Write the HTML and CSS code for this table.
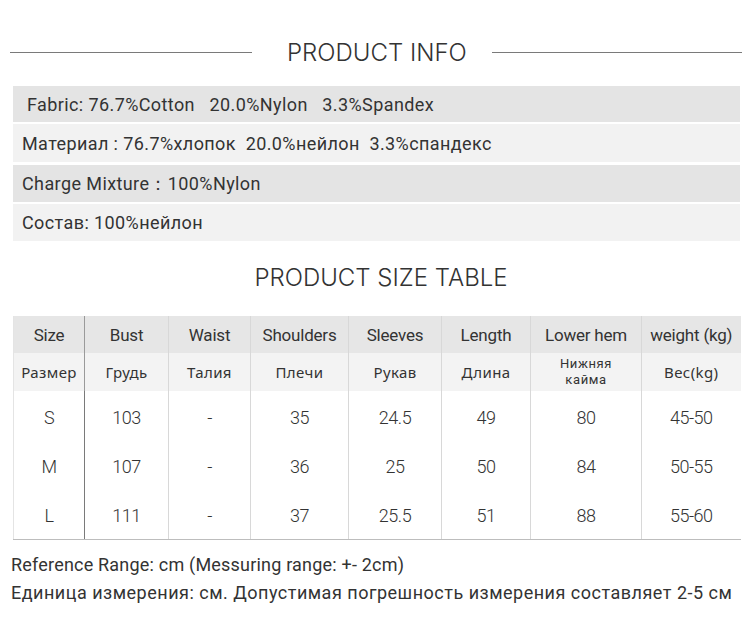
FILE: index.html
```html
<!DOCTYPE html>
<html lang="en">
<head>
<meta charset="utf-8">
<link rel="stylesheet" href="styles.css">
</head>
<body>
<div class="page">
  <div class="section-head">
    <span class="rule rule-left"></span>
    <h2 class="title">PRODUCT INFO</h2>
    <span class="rule rule-right"></span>
  </div>

  <div class="info">
    <div class="info-row dark r1"><span class="first">Fabric: 76.7%Cotton   20.0%Nylon   3.3%Spandex</span></div>
    <div class="info-row light r2">Материал : 76.7%хлопок  20.0%нейлон  3.3%спандекс</div>
    <div class="info-row dark r3">Charge Mixture：100%Nylon</div>
    <div class="info-row light r4">Состав: 100%нейлон</div>
  </div>

  <h2 class="title size-title">PRODUCT SIZE TABLE</h2>

  <table class="sizes">
    <colgroup>
      <col style="width:71px"><col style="width:84px"><col style="width:82px"><col style="width:98px">
      <col style="width:93px"><col style="width:89px"><col style="width:111px"><col style="width:99px">
    </colgroup>
    <tr class="head-en">
      <td>Size</td><td>Bust</td><td>Waist</td><td>Shoulders</td><td>Sleeves</td><td>Length</td><td>Lower hem</td><td>weight (kg)</td>
    </tr>
    <tr class="head-ru">
      <td>Размер</td><td>Грудь</td><td>Талия</td><td>Плечи</td><td>Рукав</td><td>Длина</td><td class="two">Нижняя<br>кайма</td><td>Вес(kg)</td>
    </tr>
    <tr class="data">
      <td>S</td><td>103</td><td>-</td><td>35</td><td>24.5</td><td>49</td><td>80</td><td>45-50</td>
    </tr>
    <tr class="data">
      <td>M</td><td>107</td><td>-</td><td>36</td><td>25</td><td>50</td><td>84</td><td>50-55</td>
    </tr>
    <tr class="data last">
      <td>L</td><td>111</td><td>-</td><td>37</td><td>25.5</td><td>51</td><td>88</td><td>55-60</td>
    </tr>
  </table>

  <div class="notes">
    <p class="note1">Reference Range: cm (Messuring range: +- 2cm)</p>
    <p class="note2">Единица измерения: см. Допустимая погрешность измерения составляет 2-5 см</p>
  </div>
</div>
</body>
</html>
```
FILE: styles.css
```css
* { box-sizing: border-box; }
html, body { margin: 0; padding: 0; background: #fff; }
body {
  font-family: Roboto, "Noto Sans", "DejaVu Sans", sans-serif;
  color: #333;
  width: 750px;
  height: 630px;
  overflow: hidden;
}
.page { padding-top: 32px; }

.section-head {
  display: flex;
  align-items: center;
  height: 40px;
}
.rule { display: block; height: 1px; background: #7a7a7a; }
.rule-left { margin-left: 10px; width: 242px; }
.rule-right { width: 250px; margin-left: auto; margin-right: 8px; }
.title {
  margin: 0;
  font-family: Inter, Lato, sans-serif;
  font-weight: 300;
  font-size: 24px;
  letter-spacing: 0.2px;
  color: #333;
  white-space: nowrap;
}
.section-head .title { margin-left: 35px; letter-spacing: 0; }

.info {
  margin: 14px 10px 0 13px;
  display: flex;
  flex-direction: column;
}
.info-row {
  display: flex;
  align-items: center;
  padding-left: 9px;
  font-size: 18px;
  color: #333;
  white-space: pre;
  letter-spacing: 0.4px;
}
.info-row .first { padding-left: 5px; }
.dark { background: #e4e4e4; }
.light { background: #f2f2f2; }
.r1 { height: 36px; }
.r2 { height: 38px; margin-top: 2px; }
.r3 { height: 37px; margin-top: 3px; }
.r4 { height: 37px; margin-top: 2px; }

.size-title {
  text-align: center;
  margin-top: 22px;
  height: 30px;
  line-height: 30px;
  padding-left: 12px;
  letter-spacing: 0;
}

.sizes {
  margin: 23px 0 0 13px;
  width: 727px;
  table-layout: fixed;
  border-collapse: collapse;
}
.sizes td {
  text-align: center;
  padding: 0;
  border-left: 1px solid #d8d8d8;
  color: #333;
}
.sizes td:first-child { border-left: 1px solid #e4e4e4; }
.sizes td:nth-child(2) { border-left-color: #9a9a9a; }
.head-en td {
  background: #e6e6e6;
  height: 37px;
  font-size: 17px;
  letter-spacing: -0.2px;
}
.head-ru td {
  background: #f3f3f3;
  height: 38px;
  font-size: 15px;
  letter-spacing: 0.4px;
  font-family: "Noto Sans", Roboto, sans-serif;
}
.head-ru td.two {
  font-family: Roboto, sans-serif;
  font-size: 13px;
  line-height: 16px;
  letter-spacing: 0.6px;
}
.data td {
  height: 49px;
  padding-top: 3px;
  font-size: 18px;
  font-weight: 300;
  letter-spacing: -0.5px;
}
.data td:nth-child(2) { border-left-color: #7a7a7a; }
.data.last td { height: 50px; border-bottom: 1px solid #bdbdbd; }

.notes { margin: 12px 0 0 11px; }
.notes p { margin: 0; color: #333; }
.note1 { font-size: 18px; line-height: 26px; letter-spacing: 0.2px; }
.note2 { font-size: 18px; line-height: 30px; letter-spacing: 0.5px; }
```
